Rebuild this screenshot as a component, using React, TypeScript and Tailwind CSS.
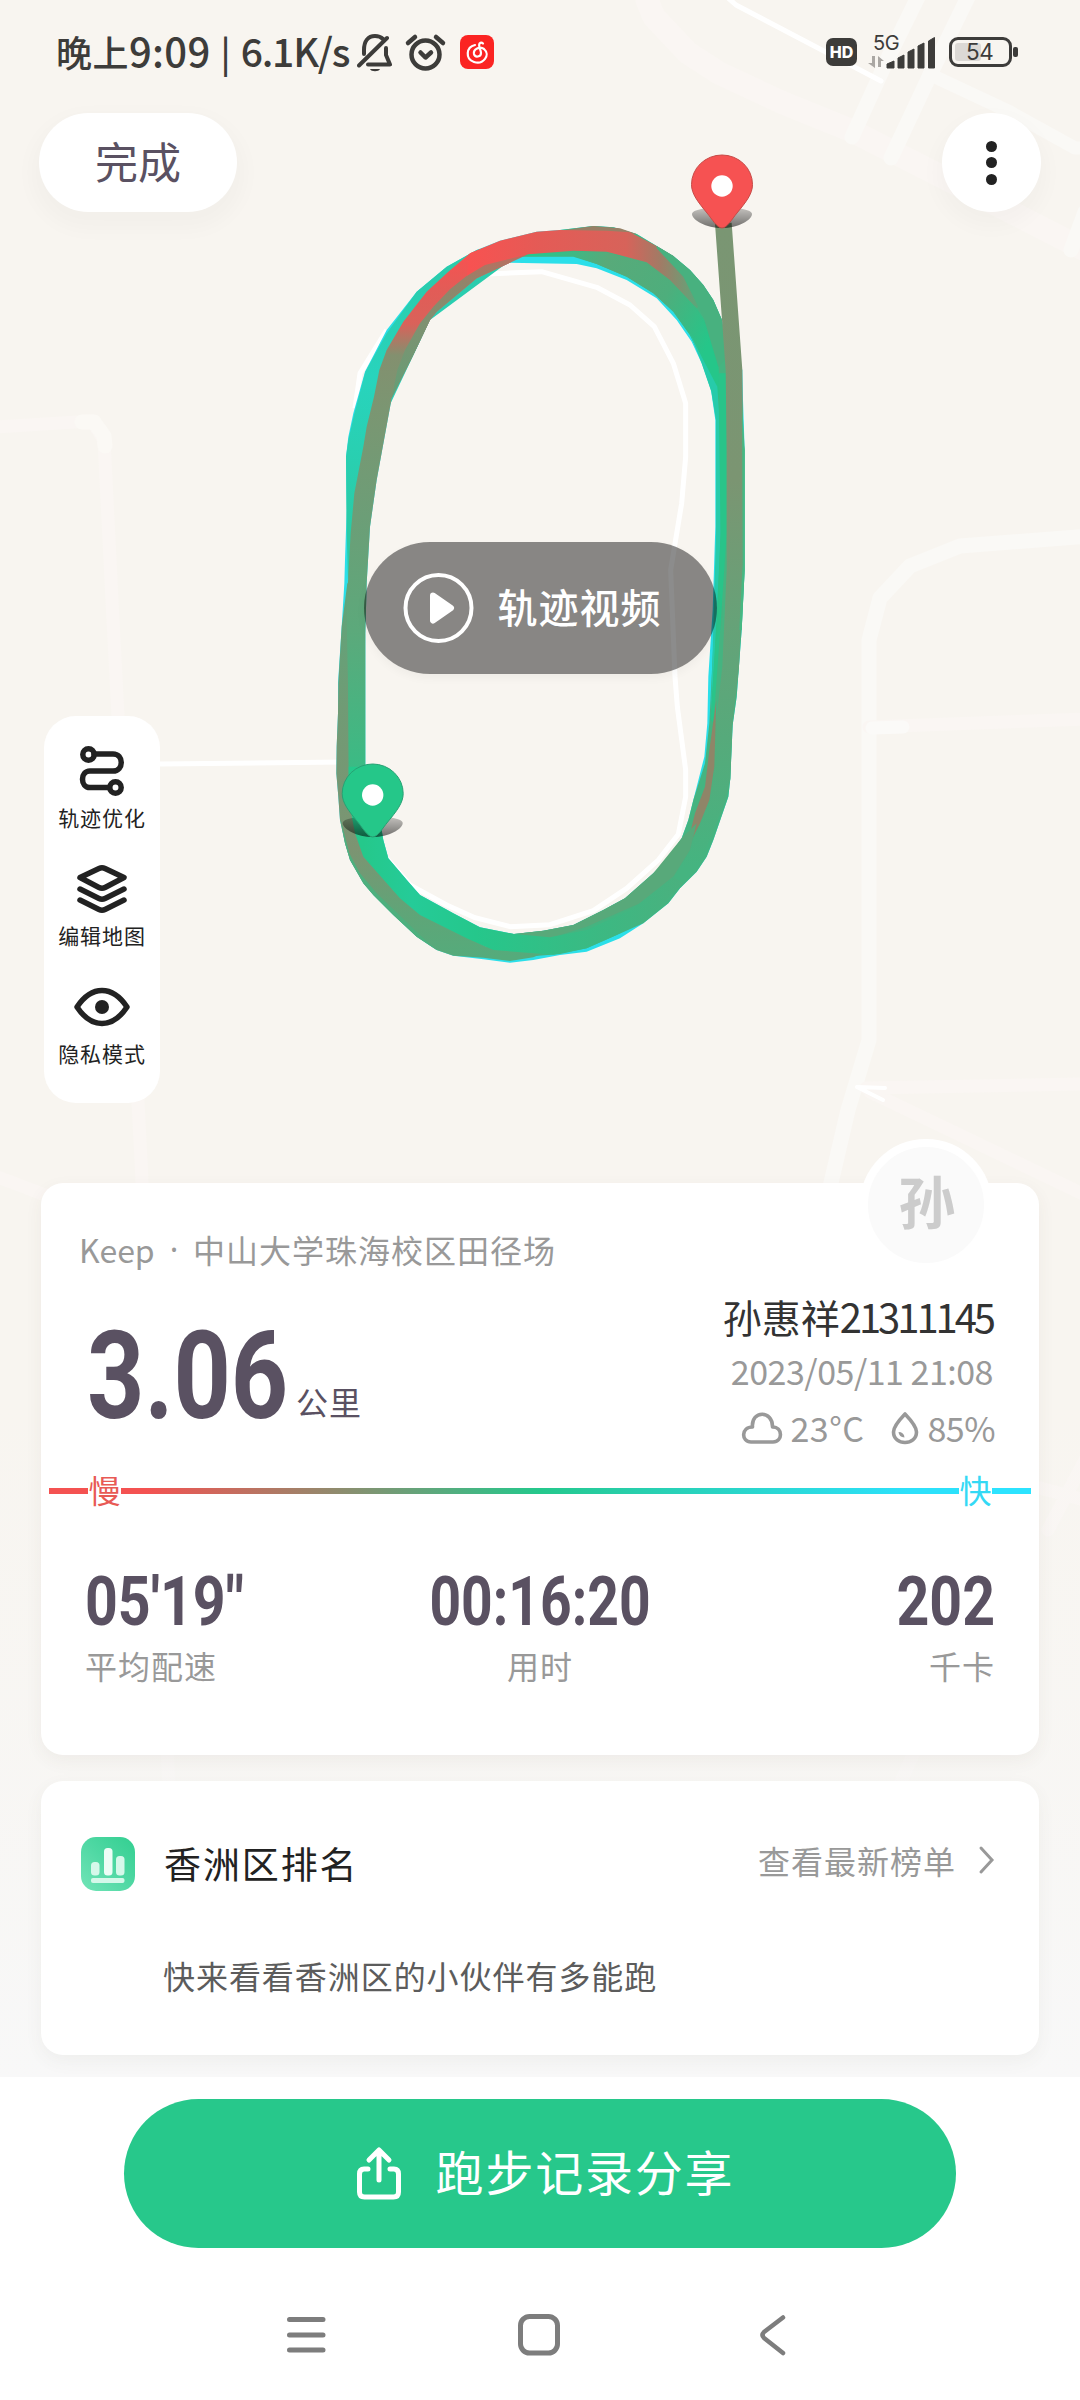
import React from "react";

function MapCanvas() {
  return (
    <svg className="absolute inset-0" width="1080" height="2077" viewBox="0 0 1080 2077" fill="none">
      <defs>
        <linearGradient id="fade" x1="0" y1="1400" x2="0" y2="2077" gradientUnits="userSpaceOnUse">
          <stop offset="0" stopColor="#f7f7f6" stopOpacity="0" />
          <stop offset="1" stopColor="#f8f8f8" />
        </linearGradient>
        <linearGradient id="leftPace" x1="0" y1="100" x2="0" y2="1800" gradientUnits="userSpaceOnUse">
          <stop offset="0.04" stopColor="#f75251" />
          <stop offset="0.1" stopColor="#e25c57" />
          <stop offset="0.16" stopColor="#d9625a" />
          <stop offset="0.215" stopColor="#83906f" />
          <stop offset="0.31" stopColor="#7b9672" />
          <stop offset="0.5" stopColor="#6c9e77" />
          <stop offset="0.7" stopColor="#5ca97b" />
          <stop offset="1" stopColor="#33bf87" />
        </linearGradient>
        <linearGradient id="innerPace" x1="0" y1="160" x2="0" y2="600" gradientUnits="userSpaceOnUse">
          <stop offset="0" stopColor="#c06b5e" />
          <stop offset="0.2" stopColor="#92846a" />
          <stop offset="0.5" stopColor="#7d9271" />
          <stop offset="1" stopColor="#649f77" />
        </linearGradient>
        <linearGradient id="topPace" x1="450" y1="0" x2="1160" y2="0" gradientUnits="userSpaceOnUse">
          <stop offset="0" stopColor="#f75251" />
          <stop offset="0.3" stopColor="#e45b56" />
          <stop offset="0.66" stopColor="#d7635a" />
          <stop offset="0.8" stopColor="#a37a65" />
          <stop offset="0.92" stopColor="#6e9c75" />
          <stop offset="1" stopColor="#43b480" />
        </linearGradient>
        <linearGradient id="archPace" x1="640" y1="160" x2="1170" y2="420" gradientUnits="userSpaceOnUse">
          <stop offset="0" stopColor="#25c88e" />
          <stop offset="0.35" stopColor="#58aa7a" />
          <stop offset="0.7" stopColor="#4eae7c" />
          <stop offset="1" stopColor="#25c689" />
        </linearGradient>
        <linearGradient id="finishPace" x1="0" y1="70" x2="0" y2="2000" gradientUnits="userSpaceOnUse">
          <stop offset="0" stopColor="#7a9673" />
          <stop offset="0.4" stopColor="#7b9572" />
          <stop offset="0.62" stopColor="#66a278" />
          <stop offset="0.8" stopColor="#56aa7b" />
          <stop offset="1" stopColor="#45b480" />
        </linearGradient>
        <linearGradient id="tealPace" x1="0" y1="150" x2="0" y2="1000" gradientUnits="userSpaceOnUse">
          <stop offset="0" stopColor="#2bcaa8" />
          <stop offset="0.45" stopColor="#28d4bd" />
          <stop offset="1" stopColor="#2acba5" />
        </linearGradient>
        <linearGradient id="outerPace" x1="0" y1="1200" x2="0" y2="2270" gradientUnits="userSpaceOnUse">
          <stop offset="0" stopColor="#5fa57a" />
          <stop offset="0.3" stopColor="#709b75" />
          <stop offset="0.7" stopColor="#7c9472" />
          <stop offset="0.88" stopColor="#5fa578" />
          <stop offset="1" stopColor="#55ab7b" />
        </linearGradient>
        <linearGradient id="bottomPace" x1="130" y1="0" x2="1100" y2="0" gradientUnits="userSpaceOnUse">
          <stop offset="0" stopColor="#25c88b" />
          <stop offset="0.15" stopColor="#25cb98" />
          <stop offset="0.35" stopColor="#25c78b" />
          <stop offset="0.7" stopColor="#3aba83" />
          <stop offset="1" stopColor="#4bb07e" />
        </linearGradient>
        <linearGradient id="pinShade" x1="0" y1="0" x2="0" y2="1">
          <stop offset="0" stopColor="#000" stopOpacity="0.2" />
          <stop offset="1" stopColor="#000" stopOpacity="0.55" />
        </linearGradient>
      </defs>

      {/* roads */}
      <g strokeLinecap="round" strokeLinejoin="round">
        <path d="M647 0 654 17 688 53 719 73 781 102 850 130 919 165 1085 250" stroke="#faf6f3" strokeWidth="23" />
        <path d="M919 -5 887 60 852 137M969 -5 929 77 891 158M1085 212 1071 250" stroke="#faf9f6" strokeWidth="15" />
        <path d="M929 74 1010 112 1075 148 1090 148" stroke="#faf9f6" strokeWidth="13" />
        <path d="M727 -3 736 5 881 81" stroke="#fff" strokeWidth="5" />
        <path d="M-5 427 92 421 104 440 113 620 125 850 141 1160 169 1790 180 2077" stroke="#faf6f3" strokeWidth="13" />
        <path d="M82 422 94 422 104 436 105 446" stroke="#fbf9f5" strokeWidth="15" />
        <path d="M-5 1176 48 1196" stroke="#faf6f3" strokeWidth="13" />
        <path d="M160 764 345 762" stroke="#fff" strokeWidth="5" strokeLinecap="butt" />
        <path d="M1090 536 960 546 910 566 880 598 869 640 869 1040 848 1110 820 1230" stroke="#faf9f6" strokeWidth="15" />
        <path d="M869 727 1085 719M866 1088 1085 1084M870 1092 960 1135 1085 1195M1085 1460 1048 1530M1040 1488 1085 1500M915 1750 880 1830" stroke="#faf6f3" strokeWidth="13" />
        <path d="M872 728 903 727" stroke="#fbfaf8" strokeWidth="13" />
        <path d="M857 1087 885 1088M857 1087 883 1100" stroke="#fff" strokeWidth="4" />
      </g>
      <rect y="1400" width="1080" height="677" fill="url(#fade)" />

      {/* run track, drawn on a grid three times finer than the page */}
      <g transform="translate(320 200) scale(0.33333)">
        <path
          d="M105 625 120 520 200 390M460 245 500 222 665 215 830 262 930 315 1003 380 1060 490 1097 610 1097 770 1085 910 1052 1110 1065 1430 1072 1520 1097 1710 1097 1790 1075 1903 1015 1980 920 2065 820 2132 690 2174 570 2180 465 2153 380 2115 270 2055 200 1975"
          stroke="#fff"
          strokeWidth="15"
          strokeLinejoin="round"
        />
        <path
          fillRule="evenodd"
          fill="#2bdfe9"
          d="M820 78 880 82 950 102 1010 138 1060 168 1110 210 1150 255 1180 300 1205 358 1267 510 1269 600 1274 750 1274 1110 1265 1290 1250 1490 1238 1575 1231 1735 1225 1790 1180 1920 1160 1970 1130 2015 1080 2065 1045 2110 970 2170 900 2215 800 2255 720 2265 640 2280 570 2288 490 2278 400 2267 350 2250 290 2210 220 2145 160 2085 130 2050 90 1980 75 1930 60 1860 55 1790 49 1720 50 1640 54 1540 54 1450 65 1280 73 1150 75 1080 80 930 78 770 85 710 100 640 135 515 200 390 290 275 380 200 470 150 540 122 650 95 720 90ZM570 188 770 192 830 205 920 240 1010 295 1070 360 1115 425 1145 490 1173 570 1186 660 1186 980 1178 1230 1165 1430 1162 1570 1153 1670 1120 1800 1105 1860 1085 1915 1040 1980 1000 2020 915 2095 850 2130 760 2175 670 2192 582 2202 480 2182 400 2140 300 2085 265 2045 205 1975 190 1920 185 1890 136 1700 136 1300 140 1150 150 980 170 840 215 595 280 465 330 360 350 335 470 235Z"
        />
        <path
          fill="url(#tealPace)"
          d="M80 1000 78 770 85 720 102 645 136 515 200 400 290 275 380 200 470 150 600 115 560 190 330 360 160 720 130 1000 84 1140Z"
        />
        <path
          fill="#45b480"
          d="M720 90 820 78 880 82 950 102 1010 138 1060 168 1110 210 1150 255 1180 300 1205 358 1240 520 1274 750 1274 1110 1265 1290 1250 1490 1238 1575 1231 1735 1225 1790 1180 1920 1160 1970 1130 2015 1080 2065 1045 2110 970 2170 890 2205 800 2245 720 2262 560 2275 440 2190 582 2202 670 2192 760 2175 850 2130 915 2095 1000 2020 1040 1980 1085 1915 1105 1860 1120 1800 1155 1690 1168 1570 1180 1330 1190 1100 1190 600 1160 510 1110 405 1060 335 1000 280 920 230 830 192 760 170 600 170Z"
        />
        <path
          fill="url(#archPace)"
          d="M600 168 700 140 860 145 1000 185 1060 250 1130 325 1160 370 1195 480 1200 600 1190 570 1155 495 1110 405 1060 335 1000 280 920 230 830 192 760 168Z"
        />
        <path fill="#27cbaa" d="M1110 400 1150 480 1192 560 1202 700 1202 1000 1192 1250 1172 1560 1181 1250 1188 1000 1188 660 1174 575 1145 490Z" />
        <path fill="#29c489" d="M1195 520 1220 520 1220 1000 1200 1300 1180 1570 1172 1560 1190 1250 1202 1000Z" />
        <path d="M820 78 900 85 950 102 820 95 720 92Z" fill="#978066" />
        <path d="M600 172 625 162 760 155 860 157 950 182 1000 200 850 148 650 152Z" fill="#41b681" />

        {/* left straight */}
        <path
          fill="url(#outerPace)"
          d="M82 1150 65 1280 55 1450 54 1540 50 1640 49 1720 55 1790 60 1860 75 1930 90 1980 130 2050 160 2085 220 2145 290 2210 350 2250 400 2267 490 2273 570 2283 640 2272 680 2255 500 2240 300 2140 220 2070 120 1930 100 1700 100 1150Z"
        />
        <path d="M60 1850 75 1930 90 1980 130 2050 160 2085 220 2145 290 2210 350 2250 300 2205 170 2080 120 2020 88 1960Z" fill="#4db07e" />
        <path
          fill="url(#leftPace)"
          d="M82 1180 92 1000 103 880 130 740 140 680 162 590 178 510 200 450 250 365 320 275 385 215 450 160 500 140 560 135 600 160 570 188 470 235 350 335 330 360 280 465 215 595 170 840 150 980 140 1150 136 1300 136 1760 86 1760 84 1450 80 1250Z"
        />
        <path fill="url(#innerPace)" d="M215 595 280 465 330 360 350 335 470 235 570 188 625 163 560 172 490 195 450 220 390 268 340 320 300 370 255 450 232 510Z" />
        <path d="M450 160 540 122 650 95 720 90 860 92 930 97 1000 133 1060 168 1140 265 1160 300 1130 325 1050 240 980 187 860 155 760 152 625 163 495 195 440 228Z" fill="url(#topPace)" />
        <path d="M1010 138 1060 168 1110 210 1150 255 1180 300 1205 358 1215 480 1195 500 1150 350 1090 230 1010 145Z" fill="#48b17f" />

        {/* finish straight */}
        <path
          d="M1210 70 1242 510 1245 750 1245 1110 1232 1400 1212 1575 1206 1735 1190 1800 1150 1900 1120 1970 1050 2045 990 2095"
          stroke="url(#finishPace)"
          strokeWidth="50"
          strokeLinejoin="round"
        />
        <path d="M1266 600 1274 750 1274 1110 1265 1290 1258 1290 1268 1090Z" fill="#47b882" />
        <path d="M1189 1500 1183 1700 1168 1800 1140 1870 1115 1920 1110 1900 1125 1840 1155 1760 1168 1650Z" fill="#8f8568" />
        <path d="M1085 1915 1130 1870 1110 1950 1060 2030 960 2110 800 2180 690 2215 582 2202 670 2192 760 2175 850 2130 915 2095 1000 2020Z" fill="#58a97a" />

        {/* start bend */}
        <path
          fill="url(#bottomPace)"
          d="M86 1700 136 1700 185 1890 190 1920 205 1975 265 2045 300 2085 400 2140 480 2182 582 2202 690 2212 800 2190 940 2125 1060 2030 1090 2050 970 2165 890 2205 800 2245 700 2264 520 2250 440 2215 300 2145 240 2095 130 1970 105 1900 86 1800Z"
        />
      </g>

      <Pin x={722} y={155} fill="#f65252" edge="#c74a47" />
      <Pin x={372.7} y={764} fill="#25c789" edge="#27a274" />
    </svg>
  );
}

function Pin({ x, y, fill, edge }: { x: number; y: number; fill: string; edge: string }) {
  return (
    <g transform={`translate(${x} ${y})`}>
      <path d="M-30 59C-30 50 30 50 30 59C30 65 16 73 0 73C-16 73 -30 65 -30 59Z" fill="url(#pinShade)" />
      <path d="M0 73C-5 73 -10 64 -15 58C-24 47 -30.500 39 -30.500 29.500A30.500 29.500 0 0 1 30.500 29.500C30.500 39 24 47 15 58C10 64 5 73 0 73Z" fill={fill} stroke={edge} strokeWidth="1" />
      <circle cy="31" r="10.700" fill="#fff" />
    </g>
  );
}

function StatusBar() {
  return (
    <div className="flex h-[113px] items-start pl-[56px] text-[#3d3c3a]">
      <div className="mt-[25px] flex w-[301px] items-baseline whitespace-nowrap font-medium leading-[50px]">
        <span className="text-[36px] tracking-[0.500px]">晚上</span>
        <span className="text-[40px] tracking-[0.300px]">9:09</span>
        <span className="mx-[10px] text-[36px]">|</span>
        <span className="text-[39px] tracking-[-1.200px]">6.1K/s</span>
      </div>
      <svg className="mt-[33px]" width="140" height="40" viewBox="357 33 140 40" fill="none" stroke="#3d3c3a" strokeWidth="4" strokeLinecap="round" strokeLinejoin="round">
        <path d="M364 54V50C364 41 368 36 375 36C379 36 381 37 383 39M386 48V55L390 64.500H368M359 65.500 387 38" />
        <path d="M370 69H380C379 72 371 72 370 69Z" fill="#3d3c3a" stroke="none" />
        <circle cx="425.500" cy="54.500" r="14" strokeWidth="4.500" />
        <path d="M420.500 52.500 425.500 57.500 431 52.500M408 43 415 37M443 43 436 37" strokeWidth="4.500" />
        <rect x="460" y="35" width="34" height="34" rx="8" fill="#fb2422" stroke="none" />
        <path d="M475 45C466 47 465 59 474 62C483 65 491 55 484 49C480 46 473 49 474 54C475 58 481 57 481 53C481 50 478 46 479.500 43.500C481 42 482.500 43 483 43.500" stroke="#fff" strokeWidth="2.200" />
      </svg>
      <div className="ml-[329px] mt-[38px] flex h-[28px] w-[31px] items-center justify-center rounded-[7px] bg-[#3d3c3a] font-['Inter'] text-[16px] font-extrabold text-white">HD</div>
      <div className="ml-[10px] mt-[32px] w-[70px]">
        <div className="ml-[6px] h-[20px] font-['Inter'] text-[20px] leading-[22px] tracking-[-0.500px]">5G</div>
        <svg className="-mt-[16px]" width="70" height="34" viewBox="867 36 70 34" fill="#3d3c3a">
          <path d="M868 63H872V56H875V68ZM884 61H881V67H878V56Z" fill="#aaa7a3" />
          <path d="M887 64 894 61V68H887ZM898 58 904 55V68H898ZM908 52 914 49V68H908ZM918 46 924 43V68H918ZM928.500 41 934.500 37.500V68H928.500Z" stroke="#3d3c3a" strokeWidth="1" strokeLinejoin="round" />
        </svg>
      </div>
      <div className="ml-[12px] mt-[37px] flex h-[30px] w-[63px] items-center rounded-[9px] border-[3px] border-[#3d3c3a] p-[3px]">
        <div className="h-[18px] w-[26px] rounded-[3px] bg-[#dcd9d5]" />
        <div className="-ml-[15px] font-['Inter'] text-[22.500px] leading-[20px] tracking-[-0.500px]">54</div>
      </div>
      <div className="ml-px mt-[47px] h-[10px] w-[5px] rounded-[2px] bg-[#3d3c3a]" />
    </div>
  );
}

function ToolLabel({ children }: { children: string }) {
  return <div className="text-[21px] leading-[28px] tracking-[0.900px]">{children}</div>;
}

function ToolPanel() {
  return (
    <div className="ml-[44px] mt-[42px] flex h-[387px] w-[116px] flex-col items-center rounded-[32px] bg-white pt-[28px] text-[#222]">
      <svg width="56" height="56" viewBox="74 744 56 56" fill="none" stroke="#222" strokeWidth="5.500" strokeLinecap="round">
        <circle cx="88.500" cy="754.500" r="5.700" />
        <circle cx="115.500" cy="787.500" r="5.700" />
        <path d="M94 754H113C124 754 124 771 113 771H90C80 771 80 787.500 90 787.500H109" />
      </svg>
      <div className="mt-[3px]"><ToolLabel>轨迹优化</ToolLabel></div>
      <svg className="mt-[31px]" width="56" height="56" viewBox="74 862 56 56" fill="none" stroke="#222" strokeWidth="5.500" strokeLinecap="round" strokeLinejoin="round">
        <path d="M80 877.500 99 868.500Q102 867 105 868.500L124 877.500 105 887.500Q102 889 99 887.500ZM80 889 99 898.500Q102 900 105 898.500L124 889M80 900 99 909.500Q102 911 105 909.500L124 900" />
      </svg>
      <div className="mt-[3px]"><ToolLabel>编辑地图</ToolLabel></div>
      <svg className="mt-[31px]" width="60" height="56" viewBox="72 980 60 56" fill="none" stroke="#222" strokeWidth="5.500" strokeLinejoin="round">
        <path d="M77 1007Q88 990.500 102 990.500T127 1007Q116 1023.500 102 1023.500T77 1007Z" />
        <circle cx="102" cy="1007" r="7" fill="#222" stroke="none" />
      </svg>
      <div className="mt-[3px]"><ToolLabel>隐私模式</ToolLabel></div>
    </div>
  );
}

function SummaryCard() {
  return (
    <section className="relative mx-[41px] h-[572px] rounded-[22px] bg-white shadow-[0_6px_18px_rgba(90,70,50,0.06)]">
      <div className="absolute left-[819px] top-[-44px] flex size-[132px] items-center justify-center rounded-full border-[8px] border-white bg-[#fafafa] text-[57px] font-bold text-[#ccc]">
        <span className="-mt-[10px] ml-[2px]">孙</span>
      </div>
      <div className="flex h-[305px] justify-between pl-[40px] pr-[46px]">
        <div className="pt-[46px]">
          <div className="flex whitespace-nowrap text-[32px] leading-[40px] text-[#999]">
            <span className="-ml-[2px] w-[76px]">Keep</span>
            <span className="w-[38px] text-center font-['Noto_Sans']">·</span>
            <span className="tracking-[1px]">中山大学珠海校区田径场</span>
          </div>
          <div className="mt-[42px] flex items-end">
            <div className="relative top-[5px] ml-[6px] w-[203px] origin-left scale-x-[0.82] whitespace-nowrap font-['Roboto'] text-[122px] font-bold leading-[122px] text-[#5a5162]">3.06</div>
            <div className="mb-[12px] ml-[6px] text-[32px] leading-[40px] tracking-[1px] text-[#5a5162]">公里</div>
          </div>
        </div>
        <div className="flex flex-col items-end whitespace-nowrap pt-[107px]">
          <div className="flex text-[39px] leading-[52px] text-[#333]"><span>孙惠祥</span><span className="text-[40px] tracking-[-3.050px]">21311145</span></div>
          <div className="mt-[7px] text-[34px] leading-[44px] tracking-[-0.500px] text-[#999]">2023/05/11 21:08</div>
          <div className="-mr-[2px] mt-[13px] flex items-center text-[34px] leading-[44px] text-[#999]">
            <svg width="42" height="34" viewBox="741 1411 42 34" fill="none" stroke="#999" strokeWidth="3.600" strokeLinejoin="round">
              <path d="M751 1442H773C783 1442 783 1427 772.500 1427C773 1410 751 1410 752.500 1427C741 1427 741 1442 751 1442Z" />
            </svg>
            <span className="ml-[7px] w-[75px] tracking-[0.500px]">23°C</span>
            <svg className="ml-[26px]" width="28" height="34" viewBox="891 1412 28 34" fill="none" stroke="#999" strokeWidth="3.600" strokeLinejoin="round">
              <path d="M905 1415Q893.500 1427 893.500 1433C893.500 1447 916.500 1447 916.500 1433Q916.500 1427 905 1415Z" />
              <path d="M898.500 1433Q904 1433 904.500 1438.500Q899 1438 898.500 1433Z" fill="#999" stroke="none" />
            </svg>
            <span className="ml-[8px] tracking-[-0.500px]">85%</span>
          </div>
        </div>
      </div>
      <div className="mx-[8px] -mt-[20px] flex h-[46px] items-center text-[32px]">
        <div className="h-[6px] w-[39px] bg-[#f45251]" />
        <div className="-mt-[4px] w-[33px] text-center text-[#e85a55]">慢</div>
        <div className="h-[6px] flex-1 bg-[linear-gradient(90deg,#f45251_0%,#f45251_3%,#24c88c_50%,#28cfae_62%,#2ce1fb_94%)]" />
        <div className="-mt-[4px] w-[33px] text-center text-[#33d9f5]">快</div>
        <div className="h-[6px] w-[39px] bg-[#2ce3ff]" />
      </div>
      <div className="mt-[53px] flex h-[70px] justify-between whitespace-nowrap pl-[44px] pr-[44px] font-['Roboto'] text-[69px] font-bold leading-[70px] text-[#5a5162]">
        <div className="w-[200px] origin-left scale-x-[0.83]">05'19"</div>
        <div className="flex w-[300px] origin-center scale-x-[0.8] justify-center">00:16:20</div>
        <div className="w-[200px] origin-right scale-x-[0.83] text-right">202</div>
      </div>
      <div className="mt-[8px] flex justify-between pl-[44px] pr-[44px] text-[32px] leading-[40px] tracking-[1px] text-[#999]">
        <span className="w-[140px]">平均配速</span>
        <span className="w-[140px] text-center">用时</span>
        <span className="w-[140px] text-right">千卡</span>
      </div>
    </section>
  );
}

function RankCard() {
  return (
    <section className="mx-[41px] mt-[26px] h-[274px] rounded-[22px] bg-white shadow-[0_6px_18px_rgba(90,80,70,0.06)]">
      <div className="flex items-center pl-[40px] pr-[42px] pt-[55px]">
        <svg width="54" height="56" viewBox="0 0 54 56" fill="none">
          <defs>
            <linearGradient id="badge" x1="0" y1="56" x2="54" y2="0" gradientUnits="userSpaceOnUse">
              <stop stopColor="#73e5b8" />
              <stop offset="0.500" stopColor="#50d8a4" />
              <stop offset="1" stopColor="#32cf90" />
            </linearGradient>
          </defs>
          <rect y="1" width="54" height="54" rx="15" fill="url(#badge)" />
          <rect x="10" y="26" width="8.500" height="13.500" rx="3.500" fill="#d5f8ea" />
          <rect x="23" y="12" width="8.500" height="27.500" rx="3.500" fill="#ecfdf6" />
          <rect x="35" y="20" width="8.500" height="19.500" rx="3.500" fill="#d5f8ea" />
          <rect x="10" y="42" width="33.500" height="5" rx="2" fill="#d5f8ea" />
        </svg>
        <h2 className="-mt-[2px] ml-[29px] text-[37px] leading-[48px] tracking-[1.900px] text-[#222]">香洲区排名</h2>
        <div className="-mt-[8px] ml-auto flex items-center text-[32px] leading-[40px] tracking-[1px] text-[#999]">
          查看最新榜单
          <svg className="ml-[21px]" width="20" height="30" viewBox="0 0 20 30" fill="none" stroke="#999" strokeWidth="3" strokeLinecap="round">
            <path d="M4 3 15 15 4 27" />
          </svg>
        </div>
      </div>
      <p className="ml-[122px] mt-[63px] text-[32px] leading-[40px] tracking-[0.950px] text-[#5c5c5c]">快来看看香洲区的小伙伴有多能跑</p>
    </section>
  );
}

function Footer() {
  return (
    <footer className="mt-[22px] h-[323px] bg-white pt-[22px]">
      <button className="mx-[124px] flex h-[149px] w-[832px] items-center justify-center rounded-full bg-[#27c88b] pl-[9px] text-[48px] tracking-[1.800px] text-white">
        <svg className="-mt-[2px] mr-[33px]" width="48" height="56" viewBox="355 2143 48 56" fill="none" stroke="#fff" strokeWidth="5" strokeLinecap="round" strokeLinejoin="round">
          <path d="M379 2178V2150M369 2158 379 2148 389 2158M368 2167H364Q359.500 2167 359.500 2172V2190Q359.500 2195 364.500 2195H393.500Q398.500 2195 398.500 2190V2172Q398.500 2167 394 2167H390" />
        </svg>
        <span className="-mt-[8px]">跑步记录分享</span>
      </button>
      <nav className="mt-[62px] flex pl-[280px]">
        <svg width="514" height="50" viewBox="280 2310 514 50" fill="none" stroke="#7d7d7d" strokeWidth="5" strokeLinecap="round" strokeLinejoin="round">
          <path d="M289.500 2319.500H323M289.500 2335H323M289.500 2350H323" />
          <rect x="520.500" y="2316.500" width="37" height="36.500" rx="9" />
          <path d="M783 2317.500 764 2332Q761 2335 764 2338L783 2353" strokeWidth="4.500" />
        </svg>
      </nav>
    </footer>
  );
}

export default function App() {
  return (
    <div className="relative h-[2400px] w-[1080px] overflow-hidden bg-[#f8f5f0] font-['Noto_Sans_CJK_SC',sans-serif]">
      <MapCanvas />
      <div className="relative">
        <StatusBar />
        <div className="flex h-[99px] justify-between pl-[39px] pr-[39px]">
          <button className="h-[99px] w-[198px] rounded-full bg-white pb-[4px] text-[43px] text-[#5a5162] shadow-[0_10px_20px_8px_rgba(60,50,40,0.025)]">完成</button>
          <button className="flex size-[99px] flex-col items-center justify-center gap-[5.500px] rounded-full bg-white shadow-[0_10px_20px_6px_rgba(60,50,40,0.025)]">
            <span className="size-[11px] rounded-full bg-[#222]" />
            <span className="size-[11px] rounded-full bg-[#222]" />
            <span className="size-[11px] rounded-full bg-[#222]" />
          </button>
        </div>
        <button className="ml-[364px] mt-[330px] flex h-[132px] w-[353px] items-center rounded-full bg-black/45 pl-[38px] text-[40px] font-medium tracking-[1px] text-white shadow-[0_4px_10px_rgba(0,0,0,0.04)]">
          <svg width="72" height="72" viewBox="402 571.500 72 72" fill="none" stroke="#fff" strokeWidth="4">
            <circle cx="438.500" cy="607.500" r="33" />
            <path d="M433 595 451 607.500 433 620Z" fill="#fff" strokeWidth="6" strokeLinejoin="round" />
          </svg>
          <span className="-mt-[5px] ml-[23.500px]">轨迹视频</span>
        </button>
        <ToolPanel />
        <div className="mt-[80px]">
          <SummaryCard />
          <RankCard />
        </div>
        <Footer />
      </div>
    </div>
  );
}
